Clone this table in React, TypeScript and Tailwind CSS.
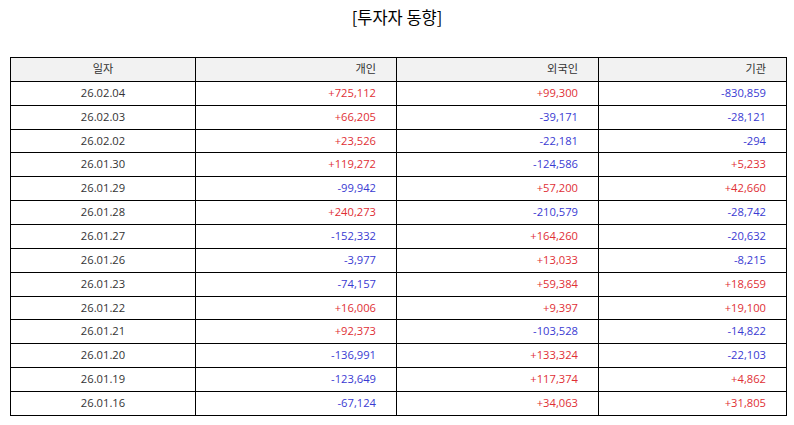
const rows = [
  ["26.02.04", "+725,112", "+99,300", "-830,859"],
  ["26.02.03", "+66,205", "-39,171", "-28,121"],
  ["26.02.02", "+23,526", "-22,181", "-294"],
  ["26.01.30", "+119,272", "-124,586", "+5,233"],
  ["26.01.29", "-99,942", "+57,200", "+42,660"],
  ["26.01.28", "+240,273", "-210,579", "-28,742"],
  ["26.01.27", "-152,332", "+164,260", "-20,632"],
  ["26.01.26", "-3,977", "+13,033", "-8,215"],
  ["26.01.23", "-74,157", "+59,384", "+18,659"],
  ["26.01.22", "+16,006", "+9,397", "+19,100"],
  ["26.01.21", "+92,373", "-103,528", "-14,822"],
  ["26.01.20", "-136,991", "+133,324", "-22,103"],
  ["26.01.19", "-123,649", "+117,374", "+4,862"],
  ["26.01.16", "-67,124", "+34,063", "+31,805"],
];

function tone(v: string) {
  return v.startsWith("+") ? "text-[#e02f35]" : "text-[#3a3ad2]";
}

export default function App() {
  return (
    <div
      className="h-[425px] w-[794px] bg-white px-[10px] pt-[5px]"
      style={{ fontFamily: '"Open Sans", "Noto Sans CJK KR", sans-serif' }}
    >
      <h1
        className="h-[52px] text-center text-[16.5px] font-normal leading-[24px] text-black"
        style={{ fontFamily: '"Noto Sans CJK KR", sans-serif' }}
      >
        [투자자 동향]
      </h1>
      <table className="w-[776px] table-fixed border-collapse text-[11.2px] text-[#333]">
        <colgroup>
          <col className="w-[185px]" />
          <col className="w-[201px]" />
          <col className="w-[202px]" />
          <col className="w-[188px]" />
        </colgroup>
        <thead>
          <tr className="h-[23.87px] bg-[#f2f2f2]">
            <th className="border border-black text-center font-normal">일자</th>
            <th className="border border-black pr-[20px] text-right font-normal">개인</th>
            <th className="border border-black pr-[20px] text-right font-normal">외국인</th>
            <th className="border border-black pr-[20px] text-right font-normal">기관</th>
          </tr>
        </thead>
        <tbody>
          {rows.map((r) => (
            <tr key={r[0]} className="h-[23.87px]">
              <td className="border border-black text-center">{r[0]}</td>
              {r.slice(1).map((v, i) => (
                <td key={i} className={`border border-black pr-[20px] text-right ${tone(v)}`}>
                  {v}
                </td>
              ))}
            </tr>
          ))}
        </tbody>
      </table>
    </div>
  );
}
